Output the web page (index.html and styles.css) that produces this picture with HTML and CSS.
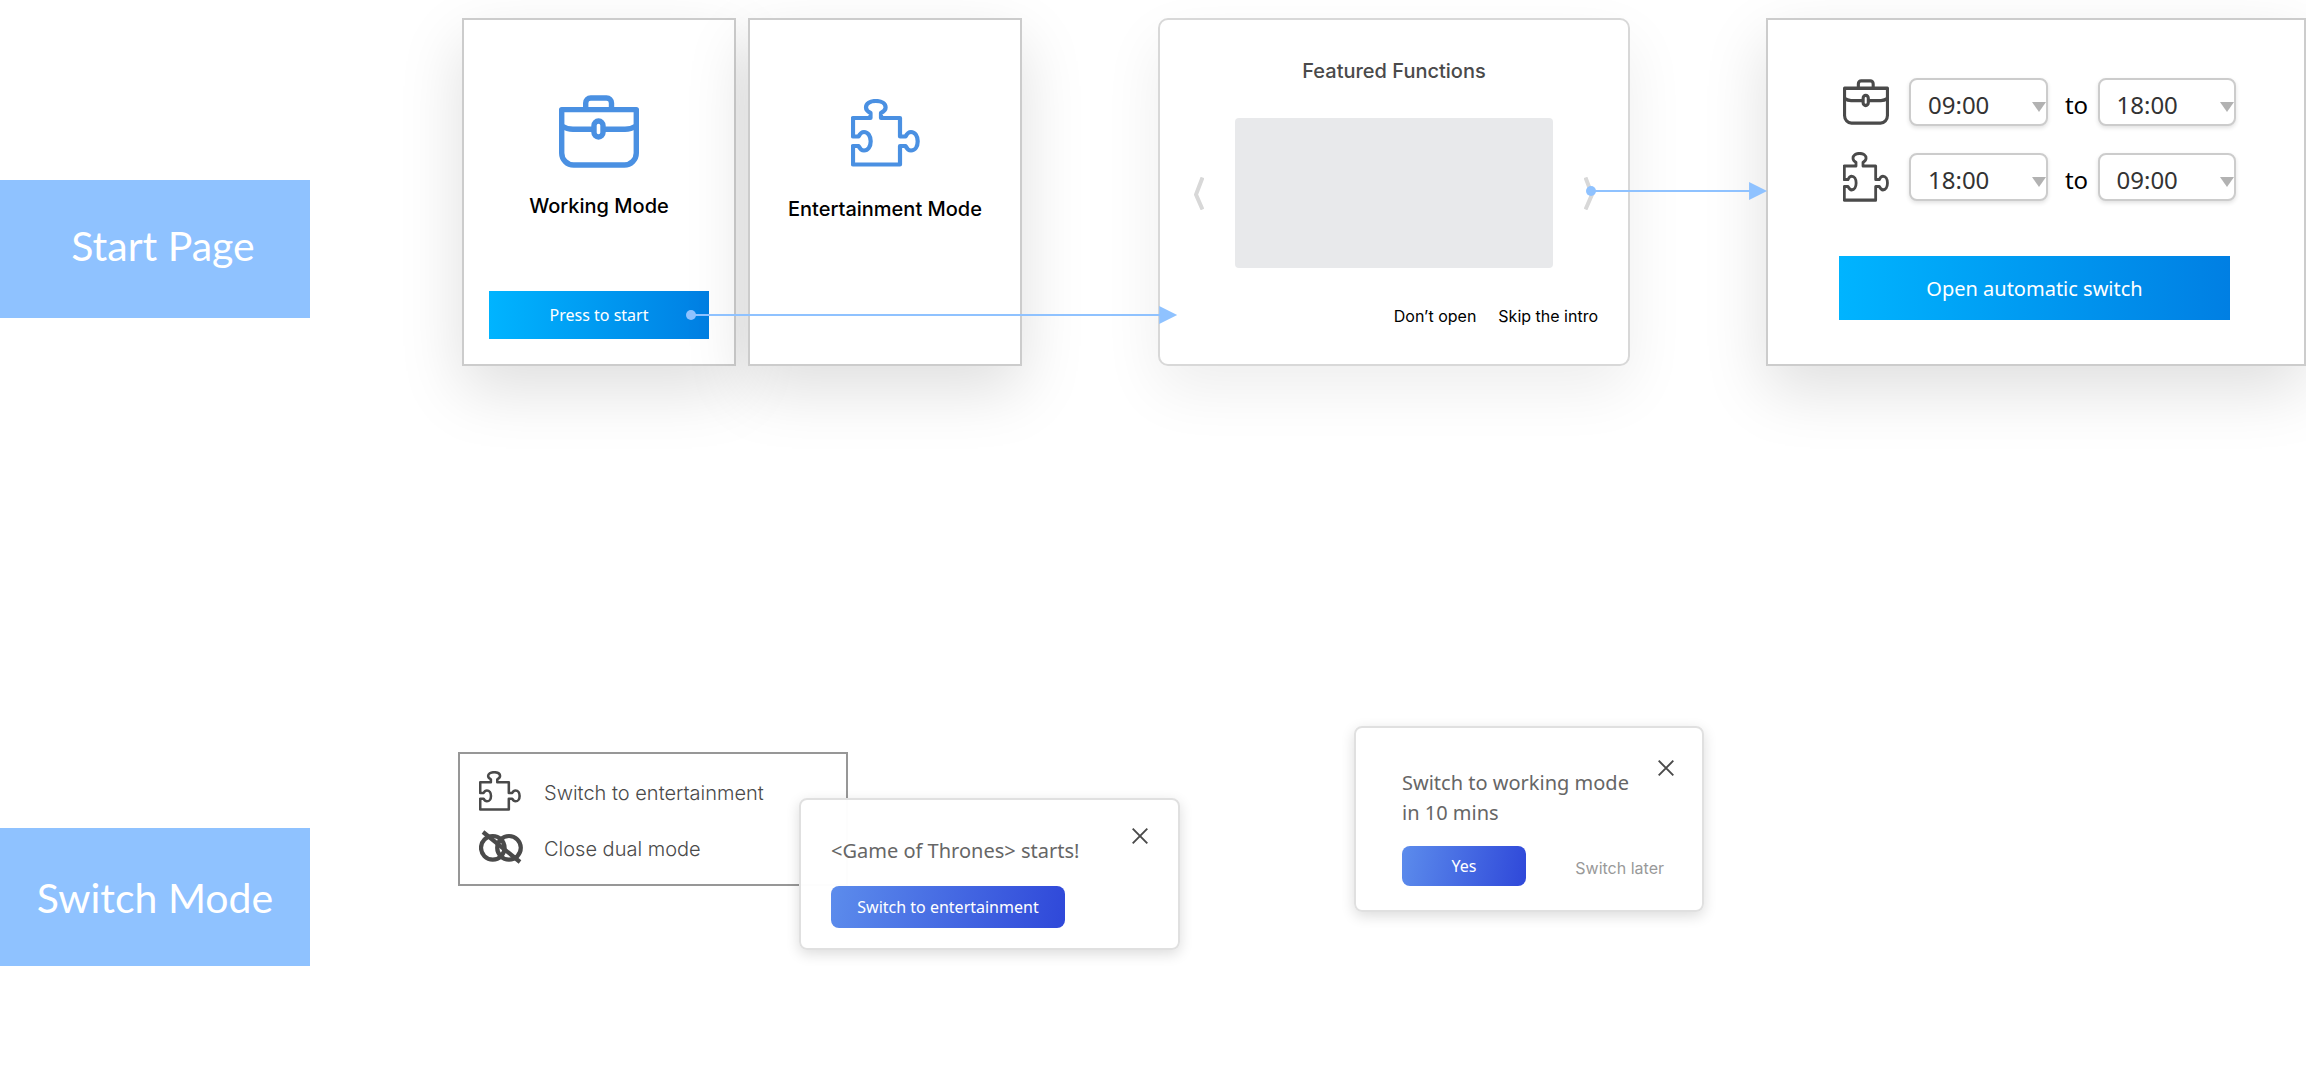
FILE: index.html
```html
<!DOCTYPE html>
<html lang="en">
<head>
<meta charset="utf-8">
<meta name="viewport" content="width=device-width, initial-scale=1">
<title>Dual mode flow</title>
<link rel="stylesheet" href="styles.css">
</head>
<body>
<svg class="sprite" aria-hidden="true">
  <symbol id="briefcase" viewBox="0 0 80 73" preserveAspectRatio="none">
    <g fill="none" stroke="currentColor" stroke-width="5.4" stroke-linejoin="round">
      <path d="M2.7 14.6H77.3V58a12 12 0 0 1-12 12H14.7a12 12 0 0 1-12-12Z"/>
      <path d="M26.7 14V8a5 5 0 0 1 5-5H47.500a5 5 0 0 1 5 5v6"/>
      <path d="M2.700 31Q8 34.300 14 34.300H34M45 34.300H66Q72 34.300 77.300 31"/>
      <rect x="35" y="26" width="9" height="16" rx="4.500"/>
    </g>
  </symbol>
  <symbol id="puzzle" viewBox="0 0 69 68" preserveAspectRatio="none">
    <path fill="none" stroke="currentColor" stroke-width="4.2" stroke-linejoin="round" d="M2 19H19.500V14C16.500 12.500 15 10.500 15 8.500C15 4.500 19 2 24.800 2S34.600 4.500 34.600 8.500C34.600 10.500 33 12.500 30 14V19H49V37.500H54.500C56 34.500 58 33 60 33C64 33 66.700 37 66.700 42.300S64 51.500 60 51.500C58 51.500 56 50 54.500 47H49V65.500H2V47H7.500C9 50 11 51.500 13 51.500C17 51.500 19.700 47.500 19.700 42.300S17 33 13 33C11 33 9 34.500 7.500 37.500H2Z"/>
  </symbol>
  <symbol id="dual-off" viewBox="0 0 44 34">
    <g fill="none" stroke="currentColor" stroke-width="4.200">
      <circle cx="13.800" cy="17.800" r="11.800"/>
      <circle cx="30" cy="17.800" r="11.800"/>
      <path d="M4 2L41 32"/>
    </g>
  </symbol>
  <symbol id="close" viewBox="0 0 16 16">
    <path d="M.7 .7L15.300 15.300M15.300 .7L.7 15.300" fill="none" stroke="currentColor" stroke-width="1.900"/>
  </symbol>
</svg>

<main class="board">
  <section class="flow flow-start">
    <h2 class="stage-label stage-label-start">Start Page</h2>

    <div class="mode-pair">
      <article class="card mode-card">
        <svg class="briefcase-large" aria-hidden="true"><use href="#briefcase"/></svg>
        <h3 class="mode-title">Working Mode</h3>
        <button class="primary start-button" type="button">Press to start</button>
      </article>
      <article class="card mode-card mode-card-idle">
        <svg class="puzzle-large" aria-hidden="true"><use href="#puzzle"/></svg>
        <h3 class="mode-title">Entertainment Mode</h3>
      </article>
    </div>

    <article class="card intro-card">
      <h3 class="intro-title">Featured Functions</h3>
      <div class="carousel">
        <button class="chevron" type="button" aria-label="Previous">
          <svg viewBox="0 0 10 33" aria-hidden="true"><path d="M8.500 .5L2 17.500L8.500 32.500"/></svg>
        </button>
        <div class="slide"></div>
        <button class="chevron" type="button" aria-label="Next">
          <svg viewBox="0 0 10 33" aria-hidden="true"><path d="M1.500 .5L8 17.500L1.500 32.500"/></svg>
        </button>
      </div>
      <div class="intro-actions">
        <button class="text-button" type="button">Don’t open</button>
        <button class="text-button" type="button">Skip the intro</button>
      </div>
    </article>

    <form class="card schedule-card">
      <div class="schedule-row">
        <svg class="briefcase-small" aria-hidden="true"><use href="#briefcase"/></svg>
        <select class="time" aria-label="Working mode from"><option>09:00</option></select>
        <span class="to">to</span>
        <select class="time" aria-label="Working mode until"><option>18:00</option></select>
      </div>
      <div class="schedule-row">
        <svg class="puzzle-small" aria-hidden="true"><use href="#puzzle"/></svg>
        <select class="time" aria-label="Entertainment mode from"><option>18:00</option></select>
        <span class="to">to</span>
        <select class="time" aria-label="Entertainment mode until"><option>09:00</option></select>
      </div>
      <button class="primary schedule-button" type="button">Open automatic switch</button>
    </form>

    <div class="connector connector-start"></div>
    <div class="connector connector-intro"></div>
  </section>

  <section class="flow flow-switch">
    <h2 class="stage-label stage-label-switch">Switch Mode</h2>

    <div class="menu-group">
      <ul class="menu">
        <li><button class="menu-item" type="button">
          <svg class="menu-puzzle" aria-hidden="true"><use href="#puzzle"/></svg><span>Switch to entertainment</span>
        </button></li>
        <li><button class="menu-item" type="button">
          <svg class="menu-dual" aria-hidden="true"><use href="#dual-off"/></svg><span>Close dual mode</span>
        </button></li>
      </ul>
      <div class="popup popup-show" role="dialog" aria-labelledby="show-title">
        <div class="popup-head">
          <p class="popup-title" id="show-title">&lt;Game of Thrones&gt; starts!</p>
          <button class="close" type="button" aria-label="Close"><svg aria-hidden="true"><use href="#close"/></svg></button>
        </div>
        <button class="accent accent-wide" type="button">Switch to entertainment</button>
      </div>
    </div>

    <div class="popup popup-work" role="dialog" aria-labelledby="work-title">
      <div class="popup-head">
        <p class="popup-title" id="work-title">Switch to working mode<br>in 10 mins</p>
        <button class="close" type="button" aria-label="Close"><svg aria-hidden="true"><use href="#close"/></svg></button>
      </div>
      <div class="popup-actions">
        <button class="accent" type="button">Yes</button>
        <button class="text-button later" type="button">Switch later</button>
      </div>
    </div>
  </section>
</main>
</body>
</html>
```
FILE: styles.css
```css
* {
  box-sizing: border-box;
}

body {
  margin: 0;
  background: #fff;
  color: #000;
  font-family: "Noto Sans", "Open Sans", sans-serif;
  font-size: 20px;
  overflow-x: hidden;
}

h2, h3, p, ul {
  margin: 0;
  padding: 0;
}

button {
  border: 0;
  padding: 0;
  background: none;
  color: inherit;
  font: inherit;
}

svg {
  display: block;
}

.sprite {
  position: absolute;
  width: 0;
  height: 0;
}

.board {
  padding-top: 18px;
}

/* Stages of the flow */

.flow {
  position: relative;
  display: grid;
}

.flow-start {
  grid-template-columns: 310fr 152fr 560fr 136fr 472fr 136fr 540fr;
}

.flow-switch {
  grid-template-columns: 310fr 148fr 722fr 174fr 350fr 602fr;
  align-items: start;
  margin-top: 360px;
}

.stage-label {
  grid-column: 1;
  height: 138px;
  background: #8fc2ff;
  color: #fff;
  font: 400 41px/132px Lato, sans-serif;
  text-align: center;
}

.stage-label-start {
  margin-top: 162px;
  padding-left: 16px;
}

.stage-label-switch {
  margin-top: 102px;
  line-height: 140px;
}

/* Start page cards */

.card {
  border: 2px solid #ccc;
  background: #fff;
  box-shadow: 0 24px 60px rgba(0, 0, 0, .13);
}

.mode-pair {
  grid-column: 3;
  display: grid;
  grid-template-columns: 1fr 1fr;
  gap: 12px;
}

.mode-card {
  display: flex;
  flex-direction: column;
  align-items: center;
  padding: 75px 25px 25px;
}

.mode-card-idle {
  padding-top: 79px;
}

.briefcase-large {
  width: 80px;
  height: 73px;
  color: #4a90e2;
}

.puzzle-large {
  width: 69px;
  height: 68px;
  color: #4a90e2;
}

.mode-title,
.intro-title {
  font: 500 20px/24px Inter, sans-serif;
  white-space: nowrap;
}

.mode-title {
  margin-top: 26px;
}

.mode-card-idle .mode-title {
  margin-top: 30px;
}

.primary {
  background: linear-gradient(90deg, #00b4ff, #007fe3);
  color: #fff;
}

.start-button {
  width: 100%;
  height: 48px;
  margin-top: auto;
  font-size: 16px;
}

.intro-card {
  grid-column: 5;
  padding: 39px 30px 38px;
  border-color: #d8d8d8;
  border-radius: 10px;
  box-shadow: 0 24px 60px rgba(0, 0, 0, .07);
}

.intro-title {
  color: #4a4a4a;
  text-align: center;
}

.carousel {
  display: grid;
  grid-template-columns: 10px 1fr 10px;
  gap: 31px;
  align-items: center;
  margin-top: 35px;
  padding: 0 4px;
}

.slide {
  height: 150px;
  border-radius: 4px;
  background: #e8e9eb;
}

.chevron svg {
  width: 10px;
  height: 33px;
  fill: none;
  stroke: #d8d8d8;
  stroke-width: 4px;
}

.intro-actions {
  display: flex;
  justify-content: flex-end;
  gap: 22px;
  margin-top: 38px;
}

.text-button {
  font: 400 16px/20px Inter, sans-serif;
  white-space: nowrap;
}

.schedule-card {
  grid-column: 7;
  padding: 58px 68px 44px 71px;
}

.schedule-row {
  display: grid;
  grid-template-columns: 66px 1fr 50px 1fr;
  align-items: center;
  height: 48px;
  margin-bottom: 26px;
  padding-left: 4px;
}

.briefcase-small,
.puzzle-small {
  width: 46px;
  color: #4a4a4a;
}

.briefcase-small {
  height: 46px;
}

.puzzle-small {
  height: 50px;
}

.time {
  width: 100%;
  min-width: 0;
  height: 48px;
  padding: 6px 17px 0;
  appearance: none;
  border: 2px solid #ccc;
  border-radius: 8px;
  background: #fff url("data:image/svg+xml,%3Csvg xmlns='http://www.w3.org/2000/svg' width='14' height='10'%3E%3Cpath d='M0 0H14L7 10Z' fill='%23b2b2b2'/%3E%3C/svg%3E") no-repeat right 22px;
  box-shadow: 0 2px 4px rgba(0, 0, 0, .12);
  color: #333;
  font: 24px/32px "Noto Sans", sans-serif;
}

.to {
  padding: 5px 0 0 8px;
  font-size: 24px;
  line-height: 32px;
  text-align: center;
}

.schedule-button {
  width: calc(100% - 6px);
  height: 64px;
  margin-top: 30px;
}

/* Connectors drawn over the cards */

.connector {
  position: absolute;
  height: 18px;
  background: linear-gradient(#8fc2ff, #8fc2ff) no-repeat 6px 8px / calc(100% - 16px) 2px;
}

.connector::before,
.connector::after {
  content: "";
  position: absolute;
  background: #8fc2ff;
}

.connector::before {
  top: 4px;
  left: 0;
  width: 10px;
  height: 10px;
  border-radius: 50%;
}

.connector::after {
  top: 0;
  right: 0;
  width: 18px;
  height: 18px;
  clip-path: polygon(0 0, 100% 50%, 0 100%);
}

.connector-start {
  top: 288px;
  left: 29.75%;
  width: 21.3%;
}

.connector-intro {
  top: 164px;
  left: 68.78%;
  width: 7.85%;
}

/* Switch menu and popups */

.menu-group {
  grid-column: 3;
  display: grid;
  grid-template-columns: 341fr 49fr 332fr;
  align-items: start;
  margin-top: 26px;
}

.menu {
  grid-area: 1 / 1 / 2 / 3;
  display: grid;
  gap: 16px;
  padding: 17px 19px;
  border: 2px solid #979797;
  color: #4a4a4a;
  list-style: none;
}

.menu-item {
  display: grid;
  grid-template-columns: 44px auto;
  gap: 21px;
  align-items: center;
  height: 40px;
  font: 300 20px/24px Inter, sans-serif;
  white-space: nowrap;
}

.menu-item span {
  padding-top: 3px;
}

.menu-puzzle {
  width: 42px;
  height: 40px;
}

.menu-dual {
  width: 44px;
  height: 34px;
}

.popup {
  border: 2px solid #e0e0e0;
  border-radius: 8px;
  background: rgba(255, 255, 255, .98);
  background-clip: padding-box;
  box-shadow: 0 4px 14px rgba(0, 0, 0, .14);
}

.popup-show {
  grid-area: 1 / 2 / 2 / 4;
  margin-top: 46px;
  padding: 28px 30px 20px;
}

.popup-work {
  grid-column: 5;
  padding: 32px 28px 24px 46px;
}

.popup-head {
  display: flex;
  justify-content: space-between;
  align-items: flex-start;
}

.popup-title {
  margin-top: 8px;
  color: #666;
  line-height: 30px;
  white-space: nowrap;
}

.close svg {
  width: 16px;
  height: 16px;
  color: #4a4a4a;
}

.accent {
  width: 124px;
  height: 40px;
  border-radius: 8px;
  background: linear-gradient(100deg, #5c8cec, #2f48d9);
  color: #fff;
  font-size: 16px;
}

.accent-wide {
  width: 234px;
  height: 42px;
  margin-top: 20px;
}

.popup-actions {
  display: flex;
  justify-content: space-between;
  align-items: center;
  margin-top: 18px;
  padding-right: 10px;
}

.later {
  padding-top: 4px;
  color: #999;
}
```
